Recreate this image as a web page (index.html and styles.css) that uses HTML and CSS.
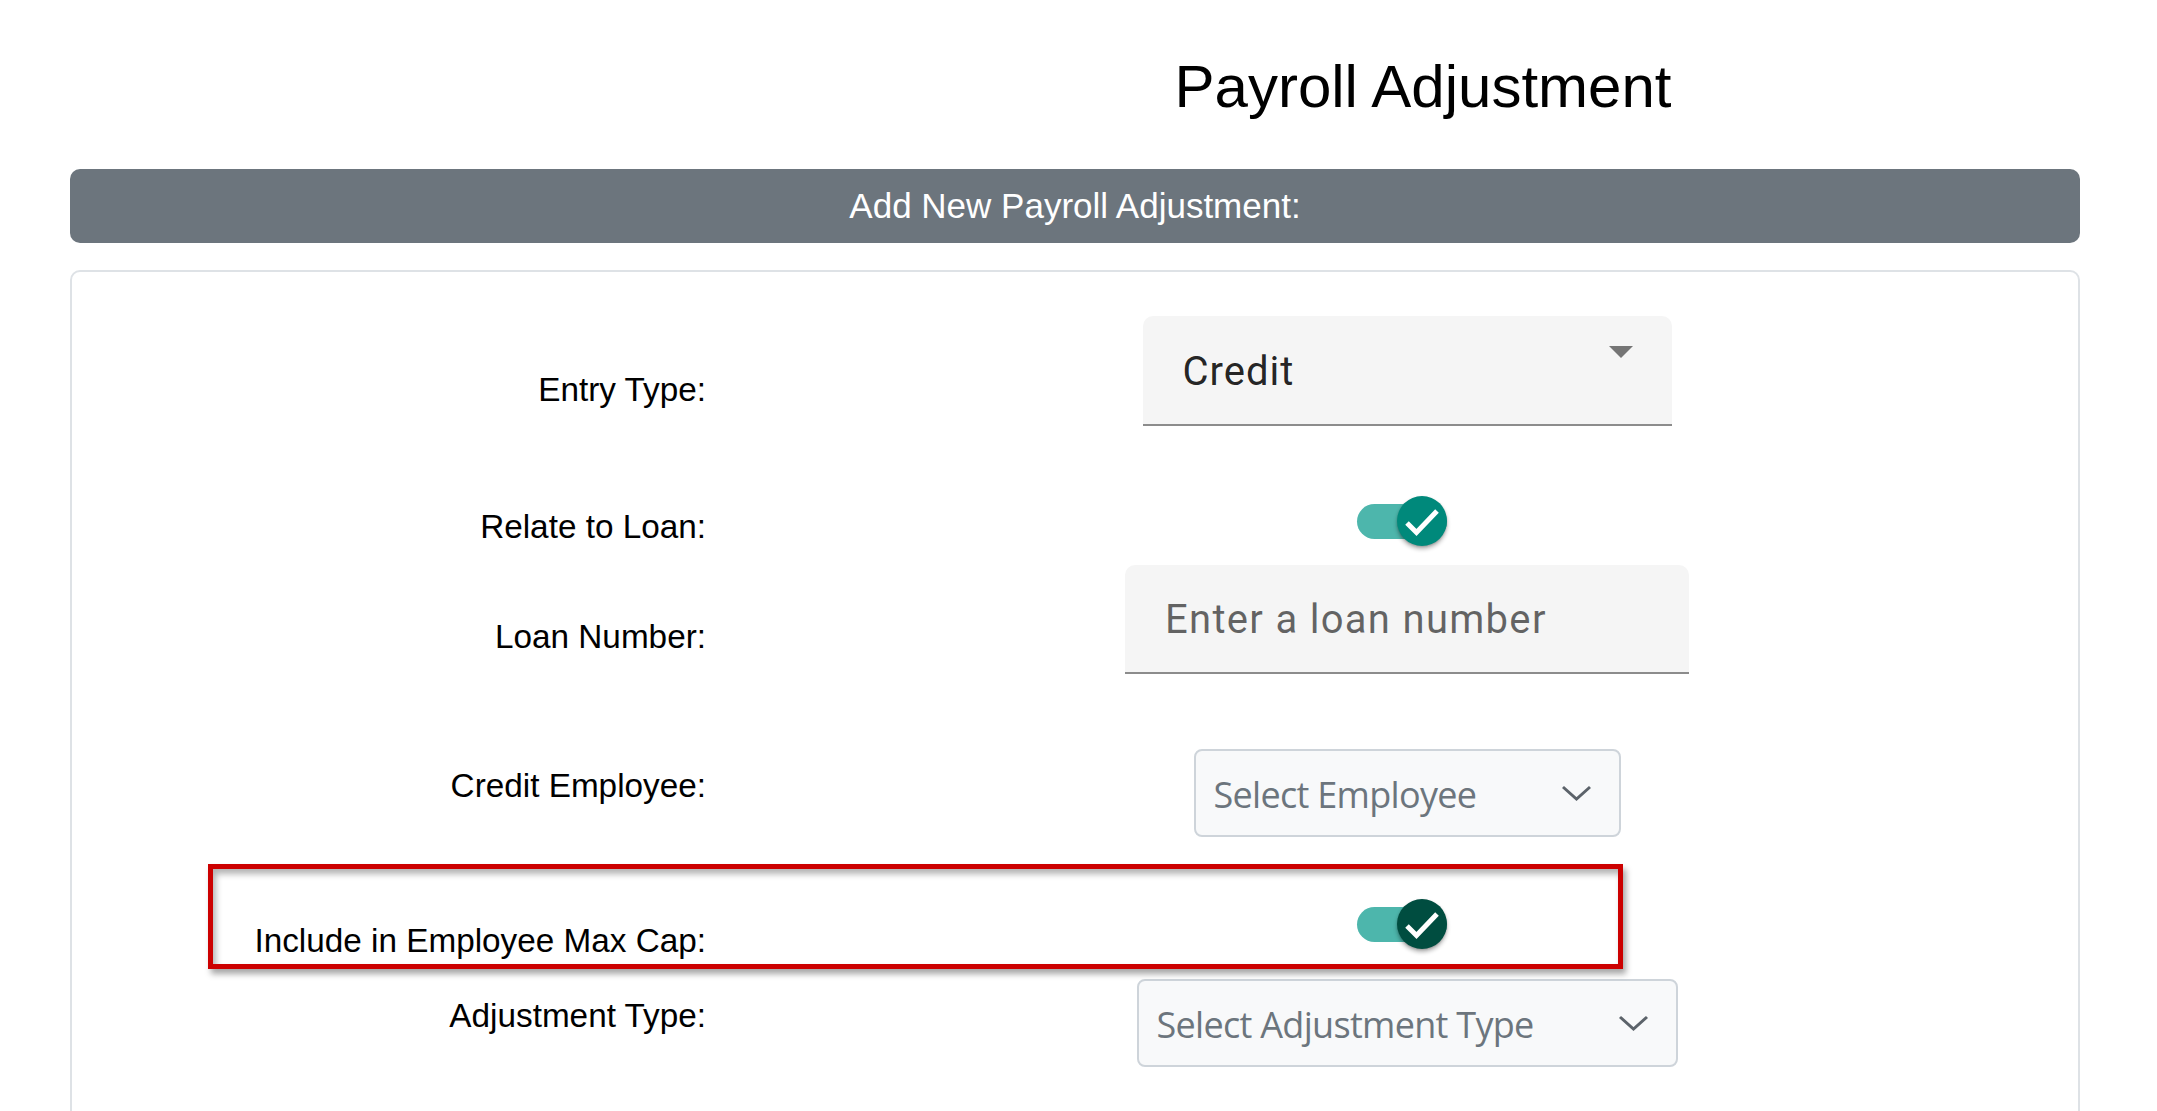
FILE: index.html
```html
<!DOCTYPE html>
<html lang="en">
<head>
<meta charset="utf-8">
<title>Payroll Adjustment</title>
<link rel="stylesheet" href="styles.css">
</head>
<body>
<div class="page">
  <h1 class="title">Payroll Adjustment</h1>
  <div class="bar">Add New Payroll Adjustment:</div>
  <div class="card">
    <div class="row r1">
      <label class="lbl">Entry Type:</label>
      <div class="mat-field mat-select">
        <span class="mat-value">Credit</span>
        <span class="mat-arrow"></span>
      </div>
    </div>
    <div class="row r2">
      <label class="lbl">Relate to Loan:</label>
      <div class="toggle">
        <span class="track"></span>
        <span class="thumb thumb-teal">
          <svg viewBox="0 0 50 50" width="50" height="50"><path d="M10 27 L19.5 36.5 L40 15" fill="none" stroke="#ffffff" stroke-width="5"/></svg>
        </span>
      </div>
    </div>
    <div class="row r3">
      <label class="lbl">Loan Number:</label>
      <div class="mat-field mat-input">
        <span class="mat-placeholder">Enter a loan number</span>
      </div>
    </div>
    <div class="row r4">
      <label class="lbl">Credit Employee:</label>
      <div class="bs-select bs-employee">
        <span class="bs-text">Select Employee</span>
        <svg class="chev" viewBox="0 0 31 16" width="31" height="16"><path d="M2 2 L15.5 14 L29 2" fill="none" stroke="#5c636a" stroke-width="3"/></svg>
      </div>
    </div>
    <div class="row r5">
      <div class="annot"></div>
      <label class="lbl">Include in Employee Max Cap:</label>
      <div class="toggle">
        <span class="track"></span>
        <span class="thumb thumb-dark">
          <svg viewBox="0 0 50 50" width="50" height="50"><path d="M10 27 L19.5 36.5 L40 15" fill="none" stroke="#ffffff" stroke-width="5"/></svg>
        </span>
      </div>
    </div>
    <div class="row r6">
      <label class="lbl">Adjustment Type:</label>
      <div class="bs-select bs-adjust">
        <span class="bs-text">Select Adjustment Type</span>
        <svg class="chev" viewBox="0 0 31 16" width="31" height="16"><path d="M2 2 L15.5 14 L29 2" fill="none" stroke="#5c636a" stroke-width="3"/></svg>
      </div>
    </div>
  </div>
</div>
</body>
</html>
```
FILE: styles.css
```css
html, body {
  margin: 0;
  padding: 0;
  background: #ffffff;
  overflow: hidden;
}

body {
  font-family: "Liberation Sans", Arial, sans-serif;
  color: #000000;
}

.page {
  width: 2010px;
  padding-left: 70px;
  height: 1111px;
  overflow: hidden;
}

.title {
  margin: 0;
  padding: 51px 0 0 696px;
  font-size: 60px;
  line-height: 72px;
  font-weight: 400;
  text-align: center;
}

.bar {
  margin-top: 46px;
  height: 74px;
  border-radius: 10px;
  background: #6c757d;
  color: #ffffff;
  font-size: 35px;
  display: flex;
  align-items: center;
  justify-content: center;
}

.card {
  margin-top: 27px;
  border: 2px solid #dee2e6;
  border-radius: 10px;
  padding-top: 44px;
  height: 860px;
}

.row {
  display: grid;
  grid-template-columns: 634px 294px 814px;
  align-items: start;
}

.lbl {
  grid-column: 1;
  text-align: right;
  font-size: 33.3px;
  line-height: 37px;
}

.row > .mat-field,
.row > .toggle,
.row > .bs-select {
  grid-column: 3;
  justify-self: center;
}

.r1 { height: 110px; }
.r1 .lbl { margin-top: 55px; }

.r2 { height: 139px; }
.r2 .lbl { margin-top: 82px; }
.r2 .toggle { margin-top: 70px; }

.r3 { height: 184px; }
.r3 .lbl { margin-top: 53px; }

.r4 { height: 115px; }
.r4 .lbl { margin-top: 18px; }

.r5 { height: 115px; position: relative; }
.r5 .lbl { margin-top: 58px; }
.r5 .toggle { margin-top: 35px; }

.r6 { height: 100px; }
.r6 .lbl { margin-top: 18px; }

/* Material fill fields */
.mat-field {
  box-sizing: border-box;
  background: #f5f5f5;
  border-radius: 10px 10px 0 0;
  border-bottom: 2px solid #8c8c8c;
  font-family: Roboto, "Liberation Sans", sans-serif;
  font-size: 40px;
  line-height: 47px;
  letter-spacing: 1px;
  display: flex;
  justify-content: space-between;
  align-items: flex-start;
}

.mat-select {
  width: 529px;
  height: 110px;
  padding: 0 39px 0 40px;
}

.mat-value {
  padding-top: 32px;
  color: rgba(0, 0, 0, 0.87);
}

.mat-arrow {
  margin-top: 30px;
  width: 0;
  height: 0;
  border-left: 12px solid transparent;
  border-right: 12px solid transparent;
  border-top: 12px solid #757575;
}

.mat-input {
  width: 564px;
  height: 109px;
  padding: 0 40px 0 40px;
  letter-spacing: 1.3px;
}

.mat-placeholder {
  padding-top: 31px;
  color: rgba(0, 0, 0, 0.6);
}

/* Slide toggle */
.toggle {
  display: flex;
  align-items: center;
  height: 50px;
  margin-right: 10px;
}

.track {
  width: 90px;
  height: 35px;
  border-radius: 18px;
  background: #4db6ac;
}

.thumb {
  width: 50px;
  height: 50px;
  margin-left: -50px;
  border-radius: 50%;
  box-shadow: 0 3px 4px rgba(0, 0, 0, 0.3), 0 1px 2px rgba(0, 0, 0, 0.15);
  display: flex;
  align-items: center;
  justify-content: center;
}

.thumb-teal { background: #00897b; }
.thumb-dark { background: #004d40; }

/* Bootstrap-like selects */
.bs-select {
  box-sizing: border-box;
  height: 88px;
  border: 2px solid #ced4da;
  border-radius: 8px;
  background: #f8f9fa;
  display: flex;
  align-items: center;
  justify-content: space-between;
  padding: 0 27px 0 18px;
  font-family: "Open Sans", "Noto Sans", sans-serif;
  font-size: 36px;
  letter-spacing: -0.7px;
  color: #6c757d;
}

.bs-text { padding-top: 2px; }

.bs-employee { width: 427px; }
.bs-adjust { width: 541px; }

.chev { display: block; }

/* Red annotation rectangle */
.annot {
  position: absolute;
  left: 136px;
  top: 0;
  width: 1415px;
  height: 105px;
  box-sizing: border-box;
  border: 5px solid #cc0000;
  box-shadow: 3px 5px 6px rgba(0, 0, 0, 0.35), inset 3px 5px 6px rgba(0, 0, 0, 0.3);
}
```
